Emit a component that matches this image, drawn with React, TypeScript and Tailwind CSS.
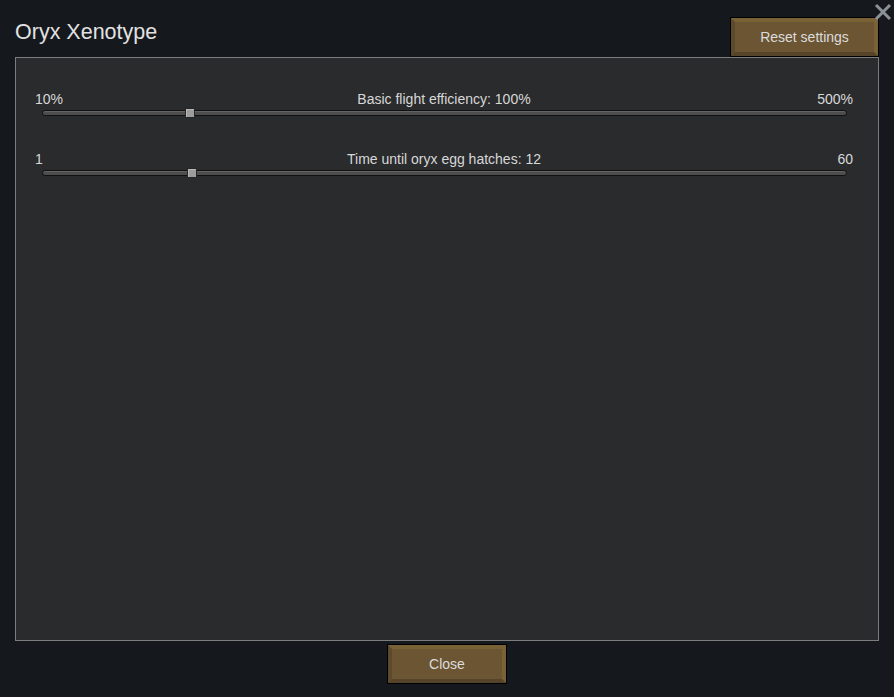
import React from "react";

function Slider({
  left,
  center,
  right,
  frac,
}: {
  left: string;
  center: string;
  right: string;
  frac: number;
}) {
  const trackW = 805;
  return (
    <div className="flex flex-col">
      <div className="grid grid-cols-[1fr_auto_1fr] text-[14px] leading-[16px] text-[#d8d8d8]">
        <span>{left}</span>
        <span>{center}</span>
        <span className="text-right">{right}</span>
      </div>
      <div className="relative mt-[3px] ml-[7px] mr-[6px] h-[6px] rounded-[3px] border border-[#111111] bg-[#4d4d4d] shadow-[inset_0_1px_0_#636363]">
        <div
          className="absolute top-[-3px] w-[10px] h-[10px] border border-[#262626] bg-[#9d9d9d] shadow-[inset_1px_1px_0_#b8b8b8]"
          style={{ left: Math.round(frac * trackW) - 6 }}
        />
      </div>
    </div>
  );
}

function Button({ label, className = "" }: { label: string; className?: string }) {
  return (
    <div className={`border border-black ${className}`}>
      <div className="h-full w-full flex items-center justify-center border-[4px] border-t-[#7a6237] border-r-[#7a6237] border-b-[#55432a] border-l-[#5c4a2c] bg-[#6b5533] text-[14px] text-[#dcdcdc]">
        {label}
      </div>
    </div>
  );
}

export default function App() {
  return (
    <div className="relative w-[894px] h-[697px] bg-[#15181d] font-['Liberation_Sans',Arial,sans-serif] text-[#dcdcdc] flex flex-col">
      <div className="absolute top-[3px] right-[2px] w-[18px] h-[18px]">
        <svg width="18" height="18" viewBox="0 0 18 18">
          <path d="M2 2 L16 16 M16 2 L2 16" stroke="#8c9196" strokeWidth="3" />
        </svg>
      </div>
      <div className="flex items-start justify-between h-[57px] pt-[17px] pl-[15px] pr-[15px]">
        <div className="mt-[3px] text-[21.5px] leading-[24px] text-[#e2e2e2]">Oryx Xenotype</div>
        <Button label="Reset settings" className="w-[149px] h-[40px]" />
      </div>
      <div className="mx-[15px] h-[584px] border border-[#7c7c7c] bg-[#2a2b2d] pt-[33px] pl-[19px] pr-[25px] flex flex-col gap-[35px]">
        <Slider left="10%" center="Basic flight efficiency: 100%" right="500%" frac={90 / 490} />
        <Slider left="1" center="Time until oryx egg hatches: 12" right="60" frac={11 / 59} />
      </div>
      <div className="flex justify-center mt-[3px]">
        <Button label="Close" className="w-[120px] h-[40px]" />
      </div>
    </div>
  );
}
